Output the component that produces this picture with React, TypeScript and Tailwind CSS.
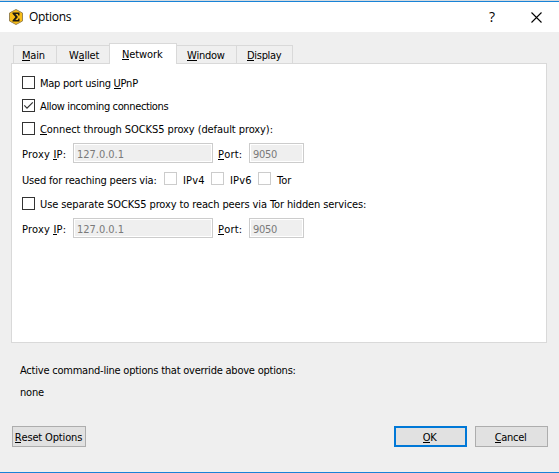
import type { ReactNode } from "react";

function Hot({ children }: { children: ReactNode }) {
  return <span className="relative inline-block after:absolute after:inset-x-0 after:bottom-[2px] after:h-px after:bg-black">{children}</span>;
}

function Box({ checked = false, disabled = false }: { checked?: boolean; disabled?: boolean }) {
  return (
    <span className={`flex size-[13px] shrink-0 items-center justify-center border bg-white ${disabled ? "border-[#cccccc]" : "border-[#333333]"}`}>
      {checked && (
        <svg className="shrink-0" width="11" height="11" viewBox="0 0 11 11" fill="none" stroke="#333" strokeWidth="1.2">
          <path d="M1.3 5.4 4 8.1 9.8 2.3" />
        </svg>
      )}
    </span>
  );
}

function CheckRow({ checked, className, children }: { checked?: boolean; className: string; children: ReactNode }) {
  return (
    <label className="flex h-[13px] items-center gap-[5px]">
      <Box checked={checked} />
      <span className={`pt-[2px] ${className}`}>{children}</span>
    </label>
  );
}

function Field({ value, className }: { value: string; className: string }) {
  return (
    <div className={`h-5 border border-[#cccccc] bg-white p-px ${className}`}>
      <div className="flex h-full items-center bg-[#efefef] pl-[2px] text-[#7a7a7a]">
        <span className="pt-[3px]">{value}</span>
      </div>
    </div>
  );
}

function ProxyRow() {
  return (
    <div className="flex h-5 items-center">
      <span className="w-[51px] pt-[3px] tracking-[0.2px]">Proxy <Hot>I</Hot>P:</span>
      <Field value="127.0.0.1" className="w-[140px] tracking-[-0.03px]" />
      <span className="ml-[5px] w-[31px] pt-[3px] tracking-[0.2px]"><Hot>P</Hot>ort:</span>
      <Field value="9050" className="w-[55px] tracking-[-0.3px]" />
    </div>
  );
}

const tab = "flex h-[18px] items-center border-t border-r border-[#d9d9d9] pt-[2px]";
const button = "border bg-[#e1e1e1] pt-[2px]";

export default function App() {
  return (
    <div className="flex h-[473px] w-[559px] flex-col overflow-hidden border-b border-[#1883d7] bg-[#efefef] font-['DejaVu_Sans_Condensed','DejaVu_Sans',sans-serif] text-[11px] leading-[15px] whitespace-nowrap text-black [font-stretch:condensed]">
      <header className="flex h-8 shrink-0 items-center border-t border-[#d5dbe0] bg-white [font-stretch:normal]">
        <div className="flex h-full w-full items-center border-t border-[#1883d7] pl-[9px]">
          <svg width="14" height="16" viewBox="0 0 14 16">
            <path d="M7 .5 13.5 4v8L7 15.5.5 12V4Z" fill="#f8bd16" stroke="#9b8551" />
            <path d="M3.5 3.5h7v3H9.3L8.8 5H6.5l2.4 3-2.6 3h2.6l.6-1.5h1v3h-7v-1L6.4 8 3.5 4.7Z" fill="#1d1a10" />
          </svg>
          <span className="ml-[6px] pb-px font-['Open_Sans',sans-serif] text-xs tracking-[-0.3px]">Options</span>
          <span className="ml-auto pb-[2px] font-['Open_Sans',sans-serif] text-[14px] font-medium">?</span>
          <svg className="mr-[17px] ml-[36px]" width="11" height="11" viewBox="0 0 11 11" stroke="#000" strokeWidth="1.1">
            <path d="m.5.5 10 10m0-10-10 10" />
          </svg>
        </div>
      </header>

      <nav className="mt-[11px] ml-[13px] flex h-[20px] shrink-0 items-end">
        <div className={`${tab} w-[44px] border-l pl-[8px] tracking-[-0.2px]`}><span><Hot>M</Hot>ain</span></div>
        <div className={`${tab} w-[52px] border-r-0 pl-[12px] tracking-[-0.2px]`}><span>W<Hot>a</Hot>llet</span></div>
        <div className="z-10 -mb-px flex h-[21px] w-[68px] items-center self-start border border-b-0 border-[#d9d9d9] bg-white pt-px pl-[12px] tracking-[-0.1px]"><span><Hot>N</Hot>etwork</span></div>
        <div className={`${tab} w-[60px] pl-[10px] tracking-[-0.3px]`}><span><Hot>W</Hot>indow</span></div>
        <div className={`${tab} w-[56px] pl-[10px] tracking-[-0.3px]`}><span><Hot>D</Hot>isplay</span></div>
      </nav>

      <main className="ml-[11px] flex h-[280px] w-[536px] shrink-0 flex-col border border-[#d9d9d9] bg-white pt-[12px] pl-[10px]">
        <CheckRow className="tracking-[-0.25px]">Map port using <Hot>U</Hot>PnP</CheckRow>
        <div className="h-[10px]" />
        <CheckRow checked className="tracking-[-0.37px]">Allow incoming connections</CheckRow>
        <div className="h-[10px]" />
        <CheckRow className="tracking-[-0.08px]"><Hot>C</Hot>onnect through SOCKS5 proxy (default proxy):</CheckRow>
        <div className="h-[8px]" />
        <ProxyRow />
        <div className="flex h-[34px] items-center pb-[3px]">
          <span className="w-[142px] pt-[4px] tracking-[-0.18px]">Used for reaching peers via:</span>
          <Box disabled /><span className="ml-[6px] w-[28px] pt-[4px] tracking-[0.2px]">IPv4</span>
          <Box disabled /><span className="ml-[6px] w-[28px] pt-[4px] tracking-[0.2px]">IPv6</span>
          <Box disabled /><span className="ml-[6px] pt-[4px]">Tor</span>
        </div>
        <CheckRow className="tracking-[-0.11px]">Use separate SOCKS5 proxy to reach peers via Tor hidden services:</CheckRow>
        <div className="h-[8px]" />
        <ProxyRow />
      </main>

      <section className="mt-[20px] flex flex-col gap-[7px] pl-[20px] tracking-[-0.22px]">
        <p>Active command-line options that override above options:</p>
        <p>none</p>
      </section>

      <footer className="mt-auto mb-[25px] flex h-[21px] shrink-0 pl-[12px]">
        <button className={`${button} w-[74px] border-[#adadad] pr-px tracking-[-0.15px]`}><Hot>R</Hot>eset Options</button>
        <button className={`${button} ml-[308px] w-[73px] border-2 border-[#0078d7] pr-[2px] tracking-[-0.3px]`}><Hot>O</Hot>K</button>
        <button className={`${button} ml-[8px] w-[73px] border-[#adadad] pr-[2px] tracking-[-0.3px]`}><Hot>C</Hot>ancel</button>
      </footer>
    </div>
  );
}
